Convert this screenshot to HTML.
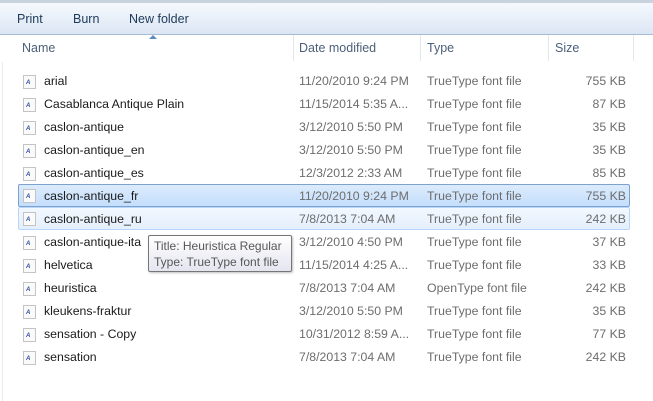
<!DOCTYPE html>
<html><head><style>
*{margin:0;padding:0;box-sizing:border-box}
body{width:653px;height:401px;overflow:hidden;background:#fff;font-family:"Liberation Sans",sans-serif;font-size:12px;position:relative}
.tb{position:absolute;left:0;top:0;width:653px;height:35px;background:linear-gradient(#f5f9fd,#dbe6f3);border-top:3px solid #c9d3de;border-bottom:1px solid #a9bcd3}
.tb span{position:absolute;top:9px;color:#1e395b;font-size:12.5px}
.hd{position:absolute;top:35px;left:0;width:653px;height:26px}
.hd span{position:absolute;top:6px;color:#4c607a;font-size:12.5px}
.sep{position:absolute;top:35px;width:1px;height:26px;background:#e3e8ef}
.row{position:absolute;left:18px;width:612px;height:23px}
.row span{position:absolute;top:4px;white-space:nowrap;font-size:12.3px}
.n{left:26px;color:#1a1a1a}
.d{left:281px;color:#6d6d6d}
.t{left:409px;color:#6d6d6d}
.s{right:4px;color:#6d6d6d}
.ic{position:absolute;left:5px;top:5px;width:13px;height:14px;border:1px solid #c4c4c4;background:#fafafa}
.ic:after{content:"A";position:absolute;left:2px;top:4px;font-size:6px;color:#2a4ea0;font-weight:bold}
.sel1{background:linear-gradient(#dcebfc,#c4defc);border:1px solid #7da2ce;border-radius:2px}
.sel2{background:linear-gradient(#f2f8fe,#e4effc);border:1px solid #b8d6fb;border-radius:2px}
.tip{position:absolute;left:148px;top:235px;width:144px;height:37px;background:linear-gradient(#fff,#e4e5f0);border:1px solid #767676;border-radius:2px;box-shadow:1px 1px 2px rgba(0,0,0,.25);color:#575757;font-size:12px;padding:2px 5px;line-height:16px}
</style></head><body>
<div class="tb"><span style="left:17px">Print</span><span style="left:73px">Burn</span><span style="left:129px">New folder</span></div>
<div style="position:absolute;left:149px;top:35px;width:0;height:0;border-left:4px solid transparent;border-right:4px solid transparent;border-bottom:4px solid #5b8bbf"></div>
<div class="hd"><span style="left:22px">Name</span><span style="left:299px">Date modified</span><span style="left:427px">Type</span><span style="left:555px">Size</span></div>
<div class="sep" style="left:293px"></div><div class="sep" style="left:420px"></div><div class="sep" style="left:548px"></div><div class="sep" style="left:633px"></div>
<div style="position:absolute;left:2px;top:62px;width:1px;height:339px;background:#e6ebf1"></div>

<div class="row" style="top:70px"><i class="ic"></i><span class="n">arial</span><span class="d">11/20/2010 9:24 PM</span><span class="t">TrueType font file</span><span class="s">755 KB</span></div>
<div class="row" style="top:93px"><i class="ic"></i><span class="n">Casablanca Antique Plain</span><span class="d">11/15/2014 5:35 A...</span><span class="t">TrueType font file</span><span class="s">87 KB</span></div>
<div class="row" style="top:116px"><i class="ic"></i><span class="n">caslon-antique</span><span class="d">3/12/2010 5:50 PM</span><span class="t">TrueType font file</span><span class="s">35 KB</span></div>
<div class="row" style="top:139px"><i class="ic"></i><span class="n">caslon-antique_en</span><span class="d">3/12/2010 5:50 PM</span><span class="t">TrueType font file</span><span class="s">35 KB</span></div>
<div class="row" style="top:162px"><i class="ic"></i><span class="n">caslon-antique_es</span><span class="d">12/3/2012 2:33 AM</span><span class="t">TrueType font file</span><span class="s">85 KB</span></div>
<div class="row sel1" style="top:184px"><i class="ic" style="top:4px;left:4px"></i><span class="n" style="top:4px;left:25px">caslon-antique_fr</span><span class="d" style="top:4px;left:280px">11/20/2010 9:24 PM</span><span class="t" style="top:4px;left:408px">TrueType font file</span><span class="s" style="top:4px;right:3px">755 KB</span></div>
<div class="row sel2" style="top:207px"><i class="ic" style="top:4px;left:4px"></i><span class="n" style="top:4px;left:25px">caslon-antique_ru</span><span class="d" style="top:4px;left:280px">7/8/2013 7:04 AM</span><span class="t" style="top:4px;left:408px">TrueType font file</span><span class="s" style="top:4px;right:3px">242 KB</span></div>
<div class="row" style="top:231px"><i class="ic"></i><span class="n">caslon-antique-ita</span><span class="d">3/12/2010 4:50 PM</span><span class="t">TrueType font file</span><span class="s">37 KB</span></div>
<div class="row" style="top:254px"><i class="ic"></i><span class="n">helvetica</span><span class="d">11/15/2014 4:25 A...</span><span class="t">TrueType font file</span><span class="s">33 KB</span></div>
<div class="row" style="top:277px"><i class="ic"></i><span class="n">heuristica</span><span class="d">7/8/2013 7:04 AM</span><span class="t">OpenType font file</span><span class="s">242 KB</span></div>
<div class="row" style="top:300px"><i class="ic"></i><span class="n">kleukens-fraktur</span><span class="d">3/12/2010 5:50 PM</span><span class="t">TrueType font file</span><span class="s">35 KB</span></div>
<div class="row" style="top:323px"><i class="ic"></i><span class="n">sensation - Copy</span><span class="d">10/31/2012 8:59 A...</span><span class="t">TrueType font file</span><span class="s">77 KB</span></div>
<div class="row" style="top:346px"><i class="ic"></i><span class="n">sensation</span><span class="d">7/8/2013 7:04 AM</span><span class="t">TrueType font file</span><span class="s">242 KB</span></div>

<div class="tip">Title: Heuristica Regular<br>Type: TrueType font file</div>
</body></html>
